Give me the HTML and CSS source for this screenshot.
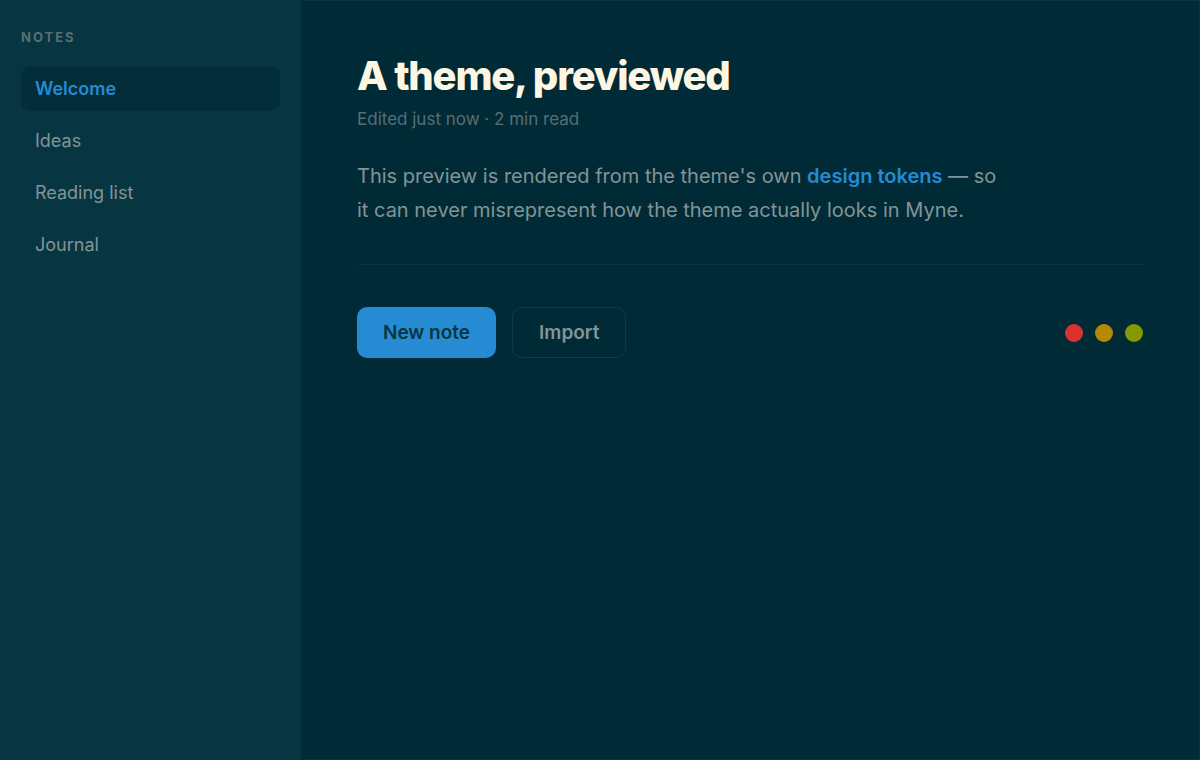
FILE: index.html
```html
<!DOCTYPE html>
<html lang="en">
<head>
    <meta charset="UTF-8">
    <meta name="viewport" content="width=device-width, initial-scale=1.0">
    <title>Theme preview</title>
    <link rel="stylesheet" href="styles.css">
</head>
<body>
    <div class="app">
        <aside class="sidebar">
            <div class="sidebar-label">Notes</div>
            <nav class="note-list">
                <a class="note-item active" href="#">Welcome</a>
                <a class="note-item" href="#">Ideas</a>
                <a class="note-item" href="#">Reading list</a>
                <a class="note-item" href="#">Journal</a>
            </nav>
        </aside>

        <main class="editor">
            <h1 class="note-title">A theme, previewed</h1>
            <div class="note-meta">Edited just now · 2 min read</div>
            <p class="note-body">
                This preview is rendered from the theme's own <a href="#" class="accent-link">design tokens</a> — so
                it can never misrepresent how the theme actually looks in Myne.
            </p>
            <hr class="divider">
            <div class="actions">
                <button class="btn btn-primary">New note</button>
                <button class="btn btn-ghost">Import</button>
                <div class="swatches">
                    <span class="swatch red"></span>
                    <span class="swatch yellow"></span>
                    <span class="swatch green"></span>
                </div>
            </div>
        </main>
    </div>
</body>
</html>
```

FILE: styles.css
```css
* {
    margin: 0;
    padding: 0;
    box-sizing: border-box;
}

html, body {
    height: 100%;
}

body {
    font-family: Inter, "Noto Sans", Arial, sans-serif;
    background-color: #073642;
    color: #839496;
}

.app {
    display: flex;
    height: 100%;
    border: 1px solid #073642;
    border-left: none;
}

.sidebar {
    width: 301px;
    flex-shrink: 0;
    background-color: #073642;
    padding: 27px 21px;
}

.sidebar-label {
    font-size: 13px;
    font-weight: 700;
    letter-spacing: 2px;
    text-transform: uppercase;
    color: #586e75;
    margin-bottom: 21px;
    padding-top: 1px;
}

.note-list {
    display: flex;
    flex-direction: column;
    gap: 7px;
}

.note-item {
    display: block;
    height: 45px;
    line-height: 45px;
    padding: 0 14px;
    border-radius: 10px;
    font-size: 18px;
    color: #839496;
    text-decoration: none;
}

.note-item.active {
    background-color: #032d39;
    color: #268bd2;
    font-weight: 600;
}

.editor {
    flex: 1;
    background-color: #002b36;
    padding: 51px 56px;
}

.note-title {
    font-size: 40px;
    font-weight: 800;
    letter-spacing: -1.2px;
    line-height: 48px;
    color: #fdf6e3;
}

.note-meta {
    font-size: 17px;
    color: #586e75;
    margin-top: 9px;
}

.note-body {
    font-size: 20px;
    line-height: 34px;
    max-width: 640px;
    margin-top: 30px;
}

.accent-link {
    color: #268bd2;
    font-weight: 600;
    text-decoration: none;
}

.divider {
    border: none;
    border-top: 1px solid #073642;
    margin: 37px 0 42px;
}

.actions {
    display: flex;
    align-items: center;
    gap: 16px;
}

.btn {
    font-family: inherit;
    font-size: 19px;
    font-weight: 600;
    height: 51px;
    padding: 0 26px;
    border-radius: 10px;
    cursor: pointer;
}

.btn-primary {
    background-color: #268bd2;
    color: #073642;
    border: none;
}

.btn-ghost {
    background: transparent;
    color: #839496;
    border: 1px solid #0a3f4c;
}

.swatches {
    margin-left: auto;
    display: flex;
    gap: 12px;
}

.swatch {
    width: 18px;
    height: 18px;
    border-radius: 50%;
}

.swatch.red { background-color: #dc322f; }
.swatch.yellow { background-color: #b58900; }
.swatch.green { background-color: #859900; }
```
